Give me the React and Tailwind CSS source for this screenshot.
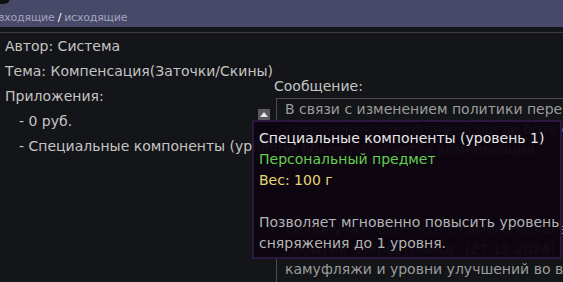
export default function App() {
  const font = { fontFamily: '"DejaVu Sans", "Noto Sans", sans-serif' };
  return (
    <div className="relative w-[563px] h-[282px] overflow-hidden bg-[#141518] text-[14px]" style={font}>
      <div className="absolute left-[-6px] top-[-8px] w-[16px] h-[12px] rounded-full bg-[#111]" />
      <div className="h-[27px] bg-[#484868] flex items-end pb-[2px] text-[11px] leading-[14px] tracking-[-0.2px] text-[#a3a3bf]">
        <span className="ml-[-2px]">входящие</span>
        <span className="text-white mx-[3px]">/</span>
        <span>исходящие</span>
      </div>
      <div className="h-[6px] bg-[#131518] border-b border-[#3c3c40]" />
      <div className="flex">
        <div className="relative w-[274px] shrink-0 pl-[5px] pt-[1px] leading-[25px] text-[#c4c4c4] whitespace-nowrap">
          <div>Автор: Система</div>
          <div>Тема: Компенсация(Заточки/Скины)</div>
          <div>Приложения:</div>
          <div className="pl-[14px]">- 0 руб.</div>
          <div className="pl-[14px]">- Специальные компоненты (уровень 1)</div>
          <div className="absolute left-[258px] top-[76px] w-[12px] h-[11px] bg-[#5a5a5e] flex items-center justify-center">
            <svg width="8" height="5" viewBox="0 0 8 5"><path d="M0 5 L4 0 L8 5 Z" fill="#e6e6e6" /></svg>
          </div>
        </div>
        <div className="flex-1 pt-[43px] min-w-0">
          <div className="leading-[20px] text-[#c4c4c4]">Сообщение:</div>
          <div className="ml-[2px] mt-[2px] border-l border-t border-[#4a4a50] pl-[8px] pt-[0px] leading-[20px] text-[#9c9c9c] whitespace-nowrap h-[200px] overflow-hidden">
            <div>В связи с изменением политики перенесения</div>
            <div>сохранения камуфляжей после боте обновления</div>
            <div>игроков полагается компенсация.</div>
            <div>&nbsp;</div>
            <div>&nbsp;</div>
            <div>&nbsp;</div>
            <div>Ее получат "все", кто с самого начала</div>
            <div>события "Перестройка" (27.12.2024)</div>
            <div>камуфляжи и уровни улучшений во время</div>
          </div>
        </div>
      </div>
      <div className="absolute left-[252px] top-[120px] w-[310px] h-[139px] bg-[#0d0510]/[0.95] border-2 border-[#2c1640] px-[5px] pt-[6px] leading-[21px] whitespace-nowrap">
        <div className="text-[#e8e8e8]">Специальные компоненты (уровень 1)</div>
        <div className="text-[#63cf4e]">Персональный предмет</div>
        <div className="text-[#e6d675]">Вес: 100 г</div>
        <div>&nbsp;</div>
        <div className="text-[#b4b4b4]">Позволяет мгновенно повысить уровень</div>
        <div className="text-[#b4b4b4]">сняряжения до 1 уровня.</div>
      </div>
    </div>
  );
}
